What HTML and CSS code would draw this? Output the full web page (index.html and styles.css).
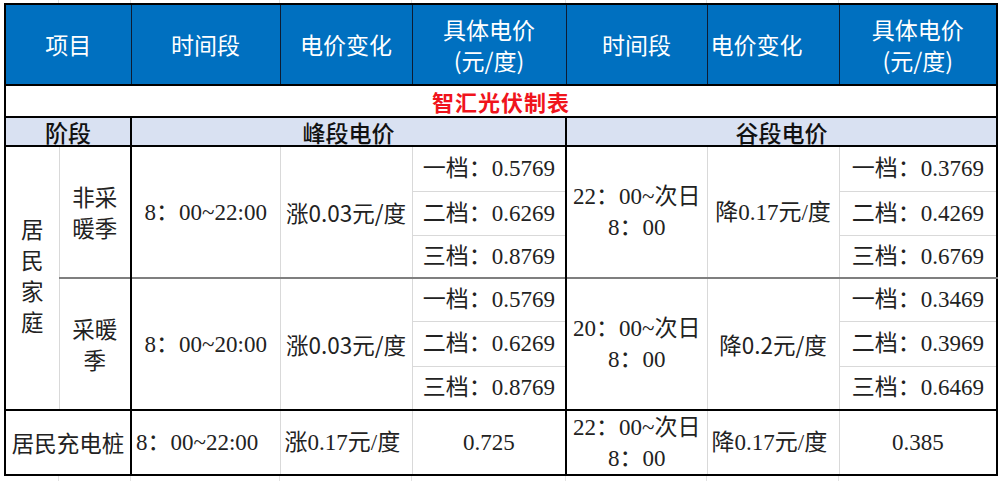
FILE: index.html
```html
<!DOCTYPE html>
<html lang="zh-CN">
<head>
<meta charset="utf-8">
<title>智汇光伏制表</title>
<link rel="stylesheet" href="styles.css">
</head>
<body>
<table class="sheet">
  <colgroup>
    <col class="c0"><col class="c1"><col class="c2"><col class="c3"><col class="c4"><col class="c5"><col class="c6"><col class="c7">
  </colgroup>
  <tr class="head">
    <th colspan="2">项目</th>
    <th>时间段</th>
    <th>电价变化</th>
    <th class="two">具体电价<br>(元/度)</th>
    <th>时间段</th>
    <th class="left">电价变化</th>
    <th class="two">具体电价<br>(元/度)</th>
  </tr>
  <tr class="title">
    <td colspan="8">智汇光伏制表</td>
  </tr>
  <tr class="stage">
    <td colspan="2">阶段</td>
    <td colspan="3" class="bl">峰段电价</td>
    <td colspan="3" class="bl">谷段电价</td>
  </tr>
  <tr class="t1">
    <td rowspan="6" class="sans vert">居<br>民<br>家<br>庭</td>
    <td rowspan="3" class="sans dark-l two">非采<br>暖季</td>
    <td rowspan="3" class="bl">8：00~22:00</td>
    <td rowspan="3" class="sans">涨0.03元/度</td>
    <td>一档：0.5769</td>
    <td rowspan="3" class="bl two">22：00~次日<br>8：00</td>
    <td rowspan="3">降0.17元/度</td>
    <td>一档：0.3769</td>
  </tr>
  <tr class="t2">
    <td>二档：0.6269</td>
    <td>二档：0.4269</td>
  </tr>
  <tr class="t3">
    <td>三档：0.8769</td>
    <td>三档：0.6769</td>
  </tr>
  <tr class="t4 grp">
    <td rowspan="3" class="sans dark-l two">采暖<br>季</td>
    <td rowspan="3" class="bl">8：00~20:00</td>
    <td rowspan="3" class="sans">涨0.03元/度</td>
    <td>一档：0.5769</td>
    <td rowspan="3" class="bl two">20：00~次日<br>8：00</td>
    <td rowspan="3" class="sans">降0.2元/度</td>
    <td>一档：0.3469</td>
  </tr>
  <tr class="t5">
    <td>二档：0.6269</td>
    <td>二档：0.3969</td>
  </tr>
  <tr class="t6">
    <td>三档：0.8769</td>
    <td>三档：0.6469</td>
  </tr>
  <tr class="last">
    <td colspan="2" class="sans">居民充电桩</td>
    <td class="bl left">8：00~22:00</td>
    <td class="left">涨0.17元/度</td>
    <td>0.725</td>
    <td class="bl two">22：00~次日<br>8：00</td>
    <td class="left">降0.17元/度</td>
    <td>0.385</td>
  </tr>
</table>
</body>
</html>
```

FILE: styles.css
```css
html, body {
  margin: 0;
  padding: 0;
}
body {
  width: 1000px;
  height: 481px;
  overflow: hidden;
  background-color: #fff;
  background-image:
    linear-gradient(to right,
      transparent 58px, #e2e2e2 58px, #e2e2e2 59px, transparent 59px,
      transparent 130px, #e2e2e2 130px, #e2e2e2 131px, transparent 131px,
      transparent 279px, #e2e2e2 279px, #e2e2e2 280px, transparent 280px,
      transparent 411px, #e2e2e2 411px, #e2e2e2 412px, transparent 412px,
      transparent 565px, #e2e2e2 565px, #e2e2e2 566px, transparent 566px,
      transparent 706px, #e2e2e2 706px, #e2e2e2 707px, transparent 707px,
      transparent 838px, #e2e2e2 838px, #e2e2e2 839px, transparent 839px);
}
.sheet {
  margin: 3px 0 0 4px;
  width: 992px;
  table-layout: fixed;
  border-collapse: collapse;
  border: 2px solid #000;
  background: #fff;
  font-family: "Liberation Serif", "Noto Sans CJK SC", serif;
  font-size: 23px;
  color: #222;
}
.c0 { width: 54px; }
.c1 { width: 72px; }
.c2 { width: 149px; }
.c3 { width: 132px; }
.c4 { width: 154px; }
.c5 { width: 141px; }
.c6 { width: 132px; }
.c7 { width: 158px; }

.sheet td, .sheet th {
  border: 1px solid #d9d9d9;
  padding: 0 2px;
  text-align: center;
  vertical-align: middle;
  white-space: nowrap;
  line-height: 31px;
}
.sans { font-family: "Noto Sans CJK SC", sans-serif; font-size: 22.5px; }
.left { text-align: left !important; }
.two { line-height: 32px; }

.head { height: 81px; }
.head th {
  background: #0070c0;
  color: #fff;
  font-family: "Noto Sans CJK SC", sans-serif;
  font-weight: 400;
  font-size: 23px;
  border: 1px solid #0d1c33;
  border-bottom: 2px solid #000;
}
.head th.left { padding-left: 3px; }

.title { height: 32px; }
.title td {
  color: #f0141c;
  font-family: "Noto Sans CJK SC", sans-serif;
  font-weight: 700;
  font-size: 22px;
  letter-spacing: 1px;
  line-height: 28px;
  border-bottom: 2px solid #000;
}

.stage { height: 29px; }
.stage td {
  background: #d9e1f2;
  color: #111;
  font-family: "Noto Sans CJK SC", sans-serif;
  font-weight: 500;
  font-size: 23px;
  line-height: 26px;
  border-bottom: 2px solid #000;
}
.sheet td.bl { border-left: 2px solid #000; }
.sheet td.dark-l { border-left: 1px solid #000; }
.vert { line-height: 31px !important; padding-bottom: 6px !important; }

.t1 { height: 45px; }
.t2 { height: 44px; }
.t3 { height: 43px; }
.t4 { height: 43px; }
.t5 { height: 45px; }
.t6 { height: 44px; }
.grp td { border-top: 2px solid #7f7f7f; }
.last { height: 65px; }
.last td { border-top: 2px solid #000; }
.last td.left { padding-left: 4px; }
```
